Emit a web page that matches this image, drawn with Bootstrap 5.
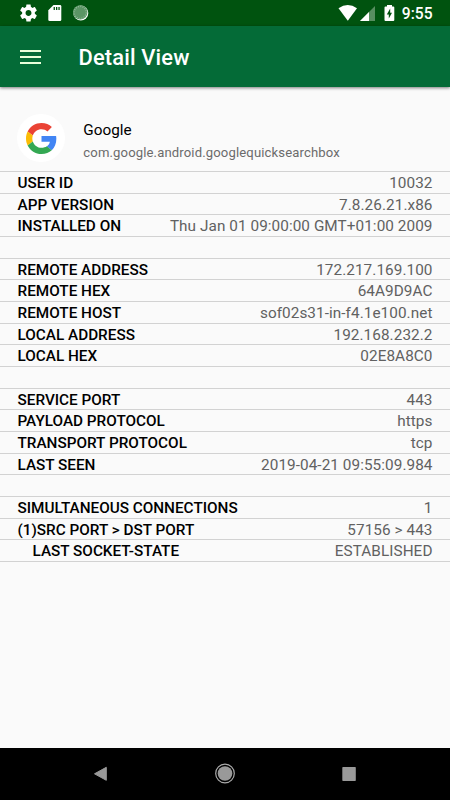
<!DOCTYPE html>
<html lang="en">
<head>
<meta charset="utf-8">
<meta name="viewport" content="width=device-width, initial-scale=1">
<title>Detail View</title>
<link rel="stylesheet" href="https://cdn.jsdelivr.net/npm/bootstrap@5.3.0/dist/css/bootstrap.min.css">
<style>
body{font-family:Roboto,"Noto Sans",sans-serif;background:#fafafa;color:#000;height:800px;overflow:hidden;line-height:1}
svg{display:block;flex:none}
.status{height:26px;background:#00530f;padding:0 17.5px 0 20px;color:#fff;font-size:15.6px;font-weight:500}
.status .ic-set{gap:9px}
.clock{margin-left:-3.500px;padding-top:2px;line-height:26px}
.appbar{height:61px;background:#046b37;padding:0 20px;box-shadow:0 1px 3px rgba(0,0,0,.5);z-index:1;position:relative}
.appbar h1{font-size:21.9px;letter-spacing:.16px;font-weight:500;margin:3px 0 0 37.5px;line-height:26px}
.apphead{height:84px;padding:27px 18px 0 17px}
.app-name{font-size:15.3px;line-height:18px;margin-top:7px}
.app-id{font-size:13.1px;letter-spacing:.13px;line-height:16px;color:#6b6b6b;margin-top:6px}
.app-text{margin-left:18.300px}
.logo{width:48px;height:48px;background:#fff}
.entry{height:21.667px;border-top:1px solid #d2d2d2;padding:0 17.5px;font-size:15.3px;line-height:22px;white-space:pre}
.entries{border-bottom:1px solid #d2d2d2}
.entry dt{font-weight:500}
.entry dd{margin:0;color:#616161;letter-spacing:.07px}
.sub-entry{padding-left:15px}
.softkeys{height:52px;background:#000;padding:0 92px}
</style>
<script src="https://cdn.jsdelivr.net/npm/bootstrap@5.3.0/dist/js/bootstrap.bundle.min.js"></script>
</head>
<body class="d-flex flex-column">
<div class="status d-flex align-items-center justify-content-between flex-shrink-0">
  <div class="ic-set d-flex align-items-center">
    <svg width="17" height="18" viewBox="2 2 20 20" fill="#fff"><path d="M19.43 12.98c.04-.32.07-.64.07-.98s-.03-.66-.07-.98l2.11-1.65c.19-.15.24-.42.12-.64l-2-3.46c-.12-.22-.39-.3-.61-.22l-2.49 1c-.52-.4-1.08-.73-1.69-.98l-.38-2.65C14.46 2.18 14.25 2 14 2h-4c-.25 0-.46.18-.49.42l-.38 2.65c-.61.25-1.17.59-1.69.98l-2.49-1c-.23-.09-.49 0-.61.22l-2 3.46c-.13.22-.07.49.12.64l2.11 1.65c-.04.32-.07.65-.07.98s.03.66.07.98l-2.11 1.65c-.19.15-.24.42-.12.64l2 3.46c.12.22.39.3.61.22l2.49-1c.52.4 1.08.73 1.69.98l.38 2.65c.03.24.24.42.49.42h4c.25 0 .46-.18.49-.42l.38-2.65c.61-.25 1.17-.59 1.69-.98l2.49 1c.23.09.49 0 .61-.22l2-3.46c.12-.22.07-.49-.12-.64l-2.11-1.65zM12 15.5c-1.93 0-3.5-1.57-3.5-3.5s1.57-3.5 3.5-3.5 3.5 1.57 3.5 3.5-1.57 3.5-3.5 3.5z"/></svg>
    <svg width="17" height="18" viewBox="0 0 17 18"><path d="M7.500 1H14q1.300 0 1.300 1.300V15.700Q15.300 17 14 17H3.700Q2.300 17 2.300 15.700V6.300z" fill="#fff"/><path d="M7.600 3h1.300v3H7.600zM10 3h1.300v3H10zM12.400 3h1.300v3h-1.300z" fill="#00530f"/></svg>
    <svg width="17" height="18" viewBox="0 0 17 18"><circle cx="8.800" cy="9" r="7.500" fill="#fff"/><circle cx="8.200" cy="8.400" r="7.200" fill="#5b9565"/><circle cx="8.200" cy="8.400" r="6" fill="none" stroke="#8db895" stroke-width="1.400" stroke-dasharray="1 1.300"/></svg>
  </div>
  <div class="d-flex align-items-center">
    <svg width="67" height="26" viewBox="0 0 67 26"><path d="M.5 8.200Q9.800 1.700 19 8.200L9.800 20.700z" fill="#fff"/><path d="M37 6V21H22z" fill="#588e60"/><path d="M31 12v9h-9z" fill="#fff"/><path d="M49 5h5v1.600h1.300q1 0 1 1V20q0 1-1 1H47.500q-1 0-1-1V7.600q0-1 1-1H49z" fill="#fff"/><path d="M52.200 8.500L48.800 14.500h2v4L54 12.700h-1.800z" fill="#00530f"/></svg>
    <span class="clock">9:55</span>
  </div>
</div>
<header class="appbar d-flex align-items-center text-white flex-shrink-0">
  <svg width="21" height="16" viewBox="0 0 21 16" fill="#e9ffda"><path d="M0 1h21v2H0zM0 7h21v2H0zM0 13h21v2H0z"/></svg>
  <h1>Detail View</h1>
</header>
<main class="flex-grow-1">
  <section class="apphead d-flex">
    <div class="logo rounded-circle d-flex align-items-center justify-content-center">
      <svg width="31" height="31" viewBox="0 0 48 48"><path fill="#EA4335" d="M24 9.500c3.540 0 6.710 1.220 9.210 3.600l6.850-6.850C35.900 2.380 30.470 0 24 0 14.620 0 6.510 5.380 2.560 13.220l7.980 6.190C12.430 13.720 17.740 9.500 24 9.500z"/><path fill="#4285F4" d="M46.980 24.550c0-1.570-.15-3.090-.38-4.550H24v9.020h12.940c-.58 2.960-2.260 5.480-4.780 7.180l7.730 6c4.510-4.180 7.090-10.360 7.090-17.650z"/><path fill="#FBBC05" d="M10.530 28.590c-.48-1.450-.76-2.990-.76-4.590s.27-3.140.76-4.590l-7.980-6.190C.92 16.460 0 20.120 0 24c0 3.880.92 7.540 2.560 10.780z"/><path fill="#34A853" d="M24 48c6.480 0 11.930-2.130 15.890-5.810l-7.730-6c-2.150 1.450-4.920 2.300-8.160 2.300-6.260 0-11.570-4.220-13.470-9.910l-7.980 6.190C6.510 42.620 14.620 48 24 48z"/></svg>
    </div>
    <div class="app-text"><div class="app-name">Google</div><div class="app-id">com.google.android.googlequicksearchbox</div></div>
  </section>
  <dl class="entries m-0">
    <div class="entry d-flex justify-content-between"><dt>USER ID</dt><dd>10032</dd></div>
    <div class="entry d-flex justify-content-between"><dt>APP VERSION</dt><dd>7.8.26.21.x86</dd></div>
    <div class="entry d-flex justify-content-between"><dt>INSTALLED ON</dt><dd>Thu Jan 01 09:00:00 GMT+01:00 2009</dd></div>
    <div class="entry"></div>
    <div class="entry d-flex justify-content-between"><dt>REMOTE ADDRESS</dt><dd>172.217.169.100</dd></div>
    <div class="entry d-flex justify-content-between"><dt>REMOTE HEX</dt><dd>64A9D9AC</dd></div>
    <div class="entry d-flex justify-content-between"><dt>REMOTE HOST</dt><dd>sof02s31-in-f4.1e100.net</dd></div>
    <div class="entry d-flex justify-content-between"><dt>LOCAL ADDRESS</dt><dd>192.168.232.2</dd></div>
    <div class="entry d-flex justify-content-between"><dt>LOCAL HEX</dt><dd>02E8A8C0</dd></div>
    <div class="entry"></div>
    <div class="entry d-flex justify-content-between"><dt>SERVICE PORT</dt><dd>443</dd></div>
    <div class="entry d-flex justify-content-between"><dt>PAYLOAD PROTOCOL</dt><dd>https</dd></div>
    <div class="entry d-flex justify-content-between"><dt>TRANSPORT PROTOCOL</dt><dd>tcp</dd></div>
    <div class="entry d-flex justify-content-between"><dt>LAST SEEN</dt><dd>2019-04-21 09:55:09.984</dd></div>
    <div class="entry"></div>
    <div class="entry d-flex justify-content-between"><dt>SIMULTANEOUS CONNECTIONS</dt><dd>1</dd></div>
    <div class="entry d-flex justify-content-between"><dt>(1)SRC PORT &gt; DST PORT</dt><dd>57156 &gt; 443</dd></div>
    <div class="entry d-flex justify-content-between"><dt class="sub-entry">LAST SOCKET-STATE</dt><dd>ESTABLISHED</dd></div>
  </dl>
</main>
<nav class="softkeys d-flex align-items-center justify-content-between flex-shrink-0">
  <svg width="16" height="18" viewBox="0 0 16 18"><path d="M2.500 8.800L14.300 2.300V15.300z" fill="#999" stroke="#999" stroke-linejoin="round"/></svg>
  <svg width="22" height="22" viewBox="0 0 22 22"><circle cx="12" cy="10.500" r="9.300" fill="none" stroke="#aaa" stroke-width="1.200"/><circle cx="12" cy="10.500" r="7.300" fill="#999"/></svg>
  <svg width="18" height="18" viewBox="0 0 18 18"><rect x="2.300" y="2" width="13.500" height="14" rx=".7" fill="#999"/></svg>
</nav>
</body>
</html>
